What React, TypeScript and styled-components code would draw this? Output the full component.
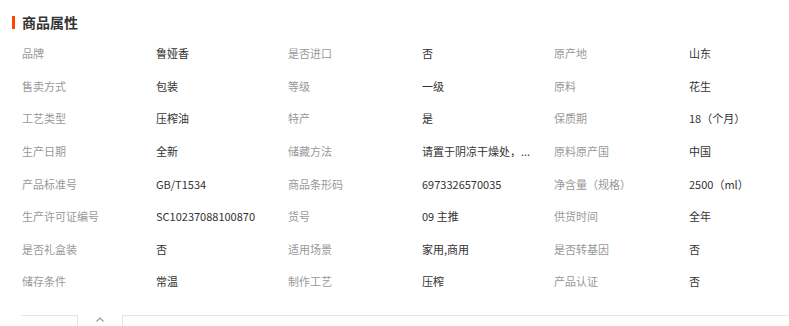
import React from "react";
import styled, { createGlobalStyle } from "styled-components";

const GlobalStyle = createGlobalStyle`
  body {
    margin: 0;
    background: #fff;
    font-family: "Microsoft YaHei", "Noto Sans CJK SC", "Noto Sans", sans-serif;
  }
`;

const StyledPanel = styled.div`
  width: 789px;
  height: 326px;
  overflow: hidden;
  padding-top: 15px;
  box-sizing: border-box;
`;

const StyledTitle = styled.h3`
  margin: 0 0 0 12px;
  display: flex;
  align-items: center;
  gap: 7px;
  height: 14px;
  font-size: 14px;
  font-weight: bold;
  color: #333;
  line-height: 14px;

  &::before {
    content: "";
    width: 3px;
    height: 13px;
    background: #ff4400;
  }
`;

const StyledGrid = styled.div`
  margin: 8px 0 0 22px;
  display: grid;
  grid-template-columns: 134px 132px 134px 132px 135px 1fr;
  grid-auto-rows: 32.6px;
  font-size: 11px;
`;

const StyledCell = styled.div<{ $label?: boolean }>`
  display: flex;
  align-items: center;
  color: ${(p) => (p.$label ? "#999" : "#333")};
  white-space: nowrap;
  overflow: hidden;
`;

const StyledTabBar = styled.div`
  margin: 17px 0 0 21px;
  display: flex;
  height: 14px;
`;

const StyledLine = styled.div<{ $width?: number }>`
  border-top: 1px solid #e5e5e5;
  ${(p) => (p.$width ? `width: ${p.$width}px;` : "flex: 1;")}
`;

const StyledToggle = styled.div`
  width: 44px;
  border-left: 1px solid #e5e5e5;
  border-right: 1px solid #e5e5e5;
  display: flex;
  justify-content: center;
  padding-top: 2px;
  color: #999;
  cursor: pointer;
`;

const attrs: [string, string][] = [
  ["品牌", "鲁娅香"],
  ["是否进口", "否"],
  ["原产地", "山东"],
  ["售卖方式", "包装"],
  ["等级", "一级"],
  ["原料", "花生"],
  ["工艺类型", "压榨油"],
  ["特产", "是"],
  ["保质期", "18（个月）"],
  ["生产日期", "全新"],
  ["储藏方法", "请置于阴凉干燥处，..."],
  ["原料原产国", "中国"],
  ["产品标准号", "GB/T1534"],
  ["商品条形码", "6973326570035"],
  ["净含量（规格）", "2500（ml）"],
  ["生产许可证编号", "SC10237088100870"],
  ["货号", "09 主推"],
  ["供货时间", "全年"],
  ["是否礼盒装", "否"],
  ["适用场景", "家用,商用"],
  ["是否转基因", "否"],
  ["储存条件", "常温"],
  ["制作工艺", "压榨"],
  ["产品认证", "否"],
];

const App = () => {
  return (
    <StyledPanel>
      <GlobalStyle />
      <StyledTitle>商品属性</StyledTitle>
      <StyledGrid>
        {attrs.map(([label, value]) => (
          <React.Fragment key={label}>
            <StyledCell $label>{label}</StyledCell>
            <StyledCell>{value}</StyledCell>
          </React.Fragment>
        ))}
      </StyledGrid>
      <StyledTabBar>
        <StyledLine $width={56} />
        <StyledToggle>
          <svg width="8" height="5" viewBox="0 0 8 5">
            <polyline
              points="0.5,4.5 4,1 7.5,4.5"
              fill="none"
              stroke="currentColor"
              strokeWidth="1.2"
            />
          </svg>
        </StyledToggle>
        <StyledLine />
      </StyledTabBar>
    </StyledPanel>
  );
};

export default App;
